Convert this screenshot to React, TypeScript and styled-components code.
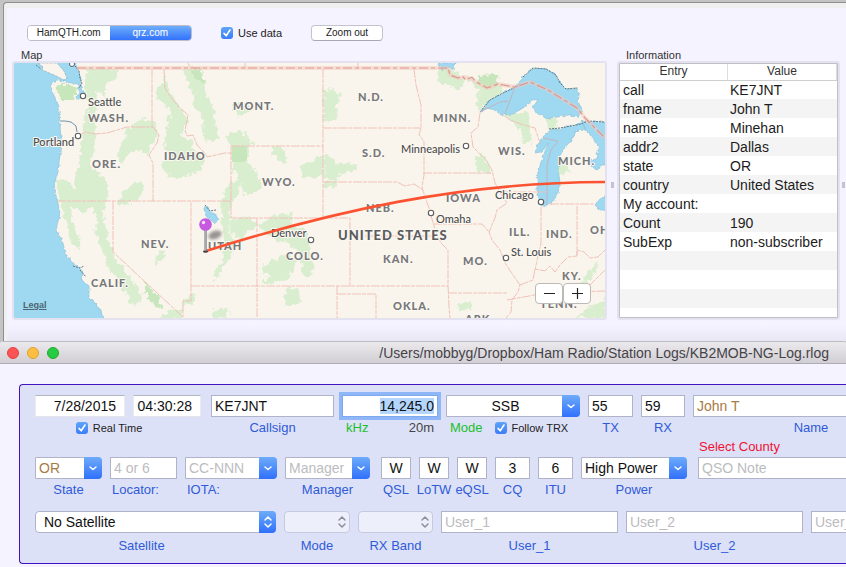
import React, { useEffect, useId, useRef } from "react";
import styled, { createGlobalStyle, css } from "styled-components";

const GlobalStyle = createGlobalStyle`
  *, *::before, *::after { box-sizing: border-box; }
  body { margin: 0; background: #c4c4c4; }
  body, button, input, select {
    font-family: "Liberation Sans", Arial, Helvetica, sans-serif;
  }
`;

/* ---------- lookup window ---------- */

const Desktop = styled.div`
  display: flex;
  flex-direction: column;
  min-height: 100vh;
  padding-top: 2px;
  overflow: hidden;
`;

const LookupWindow = styled.section`
  margin-left: 3px;
  padding: 5px 0 0 3px;
  border: 1px solid #8e8e8e;
  border-width: 1px 0 0 1px;
  border-top-left-radius: 4px;
  background: #f0f0f0;
`;

const LookupBody = styled.div`
  padding: 17px 0 21px 5px;
  background: linear-gradient(#f5f3ff, #f5f3ff calc(100% - 16px), #e9e7f4);
`;

const Toolbar = styled.div`
  display: flex;
  align-items: center;
  gap: 29px;
  height: 16px;
  margin: 0 0 7px 15px;
`;

const Segments = styled.div`
  display: flex;
  width: 165px;
  height: 16px;
  overflow: hidden;
  border: 1px solid #bdbcc8;
  border-radius: 4px;
`;

const Segment = styled.button<{ $active?: boolean }>`
  flex: 1;
  padding: 0;
  border: 0;
  font-size: 10px;
  line-height: 14px;
  color: ${(p) => (p.$active ? "#fff" : "#222")};
  background: ${(p) => (p.$active ? "linear-gradient(#6eaefb, #3272fb)" : "#fff")};
`;

const PushButton = styled.button`
  width: 72px;
  height: 16px;
  padding: 0;
  border: 1px solid #c4c2cf;
  border-bottom-color: #aaa8b4;
  border-radius: 4px;
  background: #fff;
  font-size: 10px;
  line-height: 14px;
  color: #222;
`;

const Check = styled.label`
  display: inline-flex;
  align-items: center;
  gap: 5px;
  font-size: 11px;
  line-height: 14px;
  color: #222;
  white-space: nowrap;
`;

const CheckBox = styled.span`
  display: grid;
  width: 12px;
  height: 12px;
  > * { grid-area: 1 / 1; }
  > input {
    appearance: none;
    width: 12px;
    height: 12px;
    margin: 0;
    border-radius: 3px;
    background: #fff;
  }
  > input:checked { background: linear-gradient(#5ea4f8, #3a7df8); }
  > svg { pointer-events: none; }
`;

function Tick({ label }: { label: string }) {
  return (
    <Check>
      <CheckBox>
        <input type="checkbox" defaultChecked />
        <svg width="12" height="12" viewBox="0 0 12 12" fill="none" stroke="#fff" strokeWidth="1.6" strokeLinecap="round" strokeLinejoin="round">
          <path d="M3 6.4 5.2 8.8 9 3" />
        </svg>
      </CheckBox>
      {label}
    </Check>
  );
}

const Panes = styled.div`
  display: grid;
  grid-template-columns: minmax(0, 1fr) 10px 223px 6px;
  grid-template-rows: 13px auto;
  align-items: center;
`;

const PaneTitle = styled.h2<{ $column: number }>`
  grid-column: ${(p) => p.$column};
  grid-row: 1;
  margin: 0 0 0 9px;
  font-size: 11px;
  font-weight: normal;
  line-height: 12px;
  color: #333;
`;

const Frame = styled.div<{ $column: number }>`
  position: relative;
  grid-column: ${(p) => p.$column};
  grid-row: 2;
  height: 259px;
  overflow: hidden;
  border: 2px solid #e4e1f1;
  border-radius: 3px;
`;

const Grip = styled.span<{ $column: number }>`
  grid-column: ${(p) => p.$column};
  grid-row: 2;
  justify-self: center;
  width: 3px;
  height: 6px;
  margin-bottom: 12px;
  background: #c5c3d1;
`;

const MapSvg = styled.svg`
  display: block;
  width: 100%;
  height: 100%;
`;

const ZoomGroup = styled.div`
  position: absolute;
  right: 14px;
  bottom: 14px;
  display: flex;
`;

const ZoomButton = styled.button`
  display: grid;
  place-items: center;
  width: 28px;
  height: 21px;
  padding: 0;
  border: 1px solid #bdb9b4;
  border-radius: 4px;
  background: #fff;
`;

const Legal = styled.a`
  position: absolute;
  left: 9px;
  bottom: 7px;
  font-size: 9px;
  font-weight: bold;
  line-height: 12px;
  color: #4b6570;
`;

/* ---------- map ---------- */

const StateText = styled.text`
  font: 900 11px Lato, sans-serif;
  letter-spacing: 1px;
  fill: #77777a;
  stroke: #fbf8f1;
  stroke-width: 2px;
  paint-order: stroke;
`;

const CountryText = styled(StateText)`
  font-size: 13px;
  fill: #5c5c5e;
`;

const CityText = styled.text`
  font: 500 11px Lato, sans-serif;
  fill: #4c4c4e;
  stroke: #fbf8f1;
  stroke-width: 2px;
  paint-order: stroke;
`;

const states: [string, number, number][] = [
  ["WASH.", 88, 122], ["ORE.", 92, 168], ["IDAHO", 164, 160], ["MONT.", 233, 110],
  ["N.D.", 358, 101], ["S.D.", 362, 157], ["MINN.", 433, 122], ["WIS.", 498, 155],
  ["MICH.", 558, 165], ["WYO.", 262, 186], ["NEV.", 141, 248], ["UTAH", 208, 250],
  ["CALIF.", 91, 287], ["COLO.", 286, 260], ["NEB.", 366, 212], ["IOWA", 446, 202],
  ["ILL.", 509, 236], ["IND.", 546, 238], ["OHIO", 590, 234], ["KAN.", 383, 263],
  ["MO.", 463, 265], ["KY.", 562, 280], ["OKLA.", 393, 310], ["ARK.", 465, 323],
  ["TENN.", 540, 308],
];

const cities: [string, number, number, number, number][] = [
  ["Seattle", 88, 106, 83, 96], ["Portland", 33, 146, 78, 136], ["Minneapolis", 401, 153, 466, 146],
  ["Denver", 271, 237, 311, 240], ["Chicago", 495, 199, 541, 202], ["Omaha", 436, 223, 431, 213],
  ["St. Louis", 511, 256, 506, 258],
];

const forests = [
  "M87 69H118L116 80 108 82 104 95 98 90 96 105 94 117 96 133 94 150 90 160 95 172 106 180 107 195 103 215 108 240 113 255 120 265 128 275 141 295 138 305 130 303 122 285 110 270 105 255 96 235V215L90 205 85 212 70 206 72 222 80 240 80 250 72 243 65 220 60 202 55 181H68L74 190 76 172 80 165 82 140 84 120 90 105 86 90Z",
  "M165 75 162 85 157 90 158 100 172 108 168 125 165 140V150L172 153 162 165 165 173 180 178 200 170 205 160 195 153 190 140 180 135 187 120 178 105 167 88Z",
  "M183 69H200L205 85 208 97 213 107 215 125 218 140H205L203 115 192 105 195 95 187 80Z",
  "M127 129 140 120 155 122 158 135 150 145 148 155 140 150 130 152 122 163 117 158 123 142Z",
  "M122 193 130 187 137 180 143 186 140 197 127 205 118 205Z",
  "M225 136 240 131 255 145H248L246 160 258 175 262 188 245 195 240 180 235 172 232 162V146Z",
  "M230 105 243 103 252 110 238 116Z",
  "M324 91 332 90 340 93 337 105 335 120 324 121Z",
  "M302 165 323 157V176L303 178Z M325 155 333 157 335 163 357 165 355 170 340 172 336 181 325 178Z",
  "M272 146 283 148 287 160 283 163 275 157Z",
  "M231 181H240L238 195 230 203 228 228 235 245 232 255 225 265 215 280 213 275 222 262 225 245 222 225V200Z",
  "M230 220 250 217 256 226 240 238 230 230Z",
  "M258 225 275 215 290 213V225L305 230 313 265 310 277 303 275 300 252 285 240 270 238Z",
  "M260 268 285 255 297 262 285 281 262 283 270 275Z",
  "M284 295 290 287 298 290 300 300 288 308Z",
  "M157 257 160 250 165 253 160 262 155 267Z",
  "M163 317 170 310 183 311V318Z M182 301 195 293 194 303 184 305Z M211 317 215 310 228 309V318Z",
  "M437 70 448 66 465 80 460 90 437 80Z M464 78 485 85 502 86V93L487 103 478 111 477 98 482 90Z",
  "M505 115 527 112 530 130V143L524 143 520 128Z M547 118H557L556 131 547 128Z",
  "M475 157 483 155 492 172 479 173Z M560 158H568V172L558 175Z",
  "M455 303 470 302 473 308 460 311Z",
  "M582 284 588 272 597 262V269L588 282Z M576 318 590 307 605 299V318Z",
  "M323 183H338L335 187H325Z",
];

const borders = [
  "M152 69V127 M78 136 85 132 95 134 107 133 127 127 153 127 159 135 157 143 149 155 153 163V201",
  "M164 69 165 88 170 96 179 107 188 115 185 130 187 136 193 135 197 145 205 153 207 157 225 153 231 153",
  "M231 146V218H350V286 M231 146H323 M323 69V218",
  "M323 128H421 M414 69 416 85 421 105V128L419 135 424 141V175L422 187 425 197 429 208 433 223 438 237 441 243 448 250V285L449 307 450 318",
  "M323 182H397L405 186 414 184 423 190",
  "M57 201H231 M113 201V252L183 317V301H191V201 M191 286H448 M257 218V318",
  "M350 236H437 M337 286V318 M337 294H376V318 M448 293H507",
  "M423 173H491 M480 113 478 127 471 133 473 147 486 160 492 170 495 183 501 194 507 203 497 210 495 218 489 232 492 240 500 250 505 263 513 275 520 285 518 292 512 300 511 312 506 318",
  "M433 224H482L489 232 M503 115 510 120 524 125 535 128 540 143 M503 192H547",
  "M541 207V243L538 256 535 270 M577 206V255 M550 204H595",
  "M520 285 533 280 535 269 545 271 550 266 555 272 560 265 568 257 577 256 577 250 584 252 590 258 598 257 605 250",
  "M507 300 540 294 575 292 605 291 M575 292 590 285 605 270",
  "M188 63 191 69 M245 63V69 M358 63V69",
];

const lakeLines = "M505 114 515 87 M480 112 500 102 508 101 M543 138 558 141 551 150 547 165 547 205";

function UsMap() {
  return (
    <MapSvg viewBox="14 63 591 255" preserveAspectRatio="xMidYMid slice" role="img" aria-label="Map of the United States">
      <defs>
        <filter id="ragged" x="-5%" y="-5%" width="110%" height="110%" colorInterpolationFilters="sRGB">
          <feTurbulence type="fractalNoise" baseFrequency="0.2" numOctaves="2" seed="4" />
          <feDisplacementMap in="SourceGraphic" scale="9" xChannelSelector="R" yChannelSelector="G" />
        </filter>
        <filter id="shore" x="-5%" y="-5%" width="110%" height="110%" colorInterpolationFilters="sRGB">
          <feTurbulence type="fractalNoise" baseFrequency="0.25" numOctaves="2" seed="9" />
          <feDisplacementMap in="SourceGraphic" scale="4" xChannelSelector="R" yChannelSelector="G" />
        </filter>
        <filter id="soft" x="-50%" y="-50%" width="200%" height="200%">
          <feGaussianBlur stdDeviation="1.8" />
        </filter>
      </defs>
      <rect x="14" y="63" width="591" height="255" fill="#f9f5ed" />
      <g filter="url(#ragged)">
        <g fill="#d9edcf" stroke="#d9edcf">{forests.map((d) => <path key={d} d={d} />)}</g>
        <path fill="#c8e6bb" d="M190 70 201 69 204 80 200 84ZM479 75 497 74 499 84 487 88 478 82ZM145 282 158 295 162 308 150 303 145 292ZM57 85H76L74 101H61Z" />
      </g>
      <path fill="#c8e6bb" d="M232 146H247V160L243 162H232Z" />
      <g fill="#9fd9f1" stroke="#86bcd4" strokeWidth="0.6" filter="url(#shore)">
        <path d="M8 58H74L78 70 81 78 80 85 84 92 82 97 77 100 76 96 80 92 77 84 66 82 58 80 52 82 51 88 55 98 59 110 60 125 61 138 60 155 58 172 54 185 57 199 60 213 56 230 63 243 65 253 74 265 80 268 83 272 82 280 89 287V297L97 305 106 322H8Z" />
        <path d="M480 113 490 100 503 93 518 85 523 77 533 68 546 69 556 75 560 83 566 89 577 88 579 95 578 101 582 110 578 117 566 115 558 117 548 118 536 113 533 107 538 100H533L523 108 513 114 501 115 495 110 486 108Z" />
        <path d="M534 153 540 142 546 133 553 129 560 130 566 126 574 126 581 122 587 126 582 130 576 131 573 138 568 144 563 150 559 158 558 170 560 182 558 193 553 202 545 207 539 203 537 196 537 184 538 170 543 157 548 143 541 152Z" />
        <path d="M580 120 586 122 610 122V165H603L596 170 590 164 589 158 595 160 597 155 599 148 594 140 587 131Z" />
        <path d="M595 205 600 199 610 194V210H600Z" />
        <path d="M205 205 208 207 210 212 215 214 219 220 215 223 208 218 205 212Z" />
        <path d="M438 63H456L453 69 446 68 442 71Z" />
      </g>
      <path fill="#f9f5ed" stroke="#7fa5b6" strokeWidth="0.6" strokeDasharray="3 1" d="M38 63 43 67 42 70 54 75 64 80 67 78 64 71 57 63Z" />
      <g fill="none" stroke="#5c7684" strokeWidth="1" strokeDasharray="2 1">
        <path d="M60 121 65 121 71 122 76 126 77 132" stroke="#6f93a8" strokeDasharray="none" />
        <path d="M36 65 41 69 M75 66 79 71 80 78 82 83 79 88 M73 266 80 268 84 266 M80 270 86 277" />
        <path d="M523 77 533 68 546 69 556 75 560 83 566 89 577 88 M480 112 490 100 503 93 518 86" />
        <path d="M549 129 560 128 571 126 581 124 588 121 605 122 M205 205 210 211 216 210" />
      </g>
      <path d={lakeLines} fill="none" stroke="#c0b4bf" />
      <g fill="none" stroke="#f1c1b6" strokeWidth="1" strokeDasharray="9 1 4 1">
        {borders.map((d) => <path key={d} d={d} />)}
      </g>
      <g fill="none" strokeLinejoin="round">
        <path stroke="#f3c8be" strokeOpacity=".5" strokeWidth="4" d="M77 68H448L450 75 458 78 466 77 475 81 480 84 487 88 498 84 515 87 530 82 548 90 577 108 585 118 592 125 605 138" />
        <path stroke="#e0958b" strokeWidth="1.2" strokeDasharray="9 3 4 3" d="M77 68H448L450 75 458 78 462 76 466 80 472 77 475 81 480 84 487 88 498 84 515 87 530 82 548 90 577 108 585 118 592 125 605 138" />
      </g>
      {states.map(([t, x, y]) => <StateText key={t} x={x} y={y}>{t}</StateText>)}
      <CountryText x="338" y="240">UNITED STATES</CountryText>
      <circle cx="72" cy="64" r="2.5" fill="#fff" stroke="#5d5d5d" />
      {cities.map(([t, x, y, cx, cy]) => (
        <g key={t}>
          <CityText x={x} y={y}>{t}</CityText>
          <circle cx={cx} cy={cy} r="2.7" fill="#fff" stroke="#5d5d5d" strokeWidth="1.1" />
        </g>
      ))}
      <ellipse cx="215" cy="235" rx="7" ry="4" fill="#555" opacity=".6" filter="url(#soft)" transform="rotate(-20 215 235)" />
      <path d="M206 251C330 212 460 182 606 182" fill="none" stroke="#fb5331" strokeWidth="2.6" />
      <ellipse cx="205.5" cy="251.5" rx="2.5" ry="1.2" fill="#3d3d3d" />
      <path d="M205.5 229V251" stroke="#8f8f94" strokeWidth="2.6" />
      <path d="M205 229V250" stroke="#c4c4c8" strokeWidth="1" />
      <circle cx="205.5" cy="224.5" r="6.3" fill="#c659de" />
      <circle cx="203.5" cy="222.5" r="1.7" fill="#f7e4fb" />
    </MapSvg>
  );
}

/* ---------- information table ---------- */

const TableBox = styled.div`
  height: 100%;
  overflow: hidden;
  border: 1px solid #bfbfc4;
  background: #fff;
`;

const InfoTable = styled.table`
  width: 100%;
  table-layout: fixed;
  border-collapse: collapse;
  th {
    height: 16px;
    padding: 0;
    border-bottom: 1px solid #cfcfcf;
    font-size: 12px;
    font-weight: normal;
    line-height: 15px;
    color: #333;
  }
  th:first-child { width: 107px; }
  th + th { box-shadow: inset 1px 0 #dcdcdc, inset -1px 0 #dcdcdc; }
  td {
    height: 19px;
    padding: 0 3px;
    font-size: 14px;
    line-height: 18px;
    color: #1c1c1c;
    white-space: nowrap;
  }
  tbody tr:nth-child(even) { background: #f4f4f4; }
`;

const info = [
  ["call", "KE7JNT"], ["fname", "John T"], ["name", "Minehan"], ["addr2", "Dallas"],
  ["state", "OR"], ["country", "United States"], ["My account:", ""], ["Count", "190"],
  ["SubExp", "non-subscriber"], ["", ""], ["", ""], ["", ""], ["", ""],
];

/* ---------- log window ---------- */

const LogWindow = styled.section`
  flex: 1;
  overflow: hidden;
  border-radius: 4px 4px 0 0;
  background: #f5f3ff;
`;

const TitleBar = styled.header`
  display: flex;
  align-items: center;
  gap: 8px;
  height: 23px;
  padding: 0 17px 0 7px;
  border-top: 1px solid #bcbac2;
  border-bottom: 1px solid #aeacb5;
  background: linear-gradient(#ebe9ec, #d2cfd4);
`;

const Light = styled.button<{ $color: string; $edge: string }>`
  width: 12px;
  height: 12px;
  padding: 0;
  border: 1px solid ${(p) => p.$edge};
  border-radius: 50%;
  background: ${(p) => p.$color};
`;

const Title = styled.h1`
  margin: 0 0 0 auto;
  font-size: 14px;
  font-weight: normal;
  line-height: 20px;
  color: #454348;
  white-space: nowrap;
`;

const Panel = styled.form`
  display: flex;
  flex-direction: column;
  margin: 20px 0 3px 19px;
  padding: 10px 0 9px 15px;
  overflow: hidden;
  border: 1px solid #4112bd;
  border-right: 0;
  border-radius: 4px 0 0 4px;
  background: #dde1f7;
`;

const Row = styled.div<{ $columns: string }>`
  display: grid;
  grid-template-columns: ${(p) => p.$columns};
  column-gap: 8px;
`;

const NoteRow = styled(Row)`
  row-gap: 2px;
  margin: 3px 0 13px;
`;

const County = styled.a`
  grid-column: -2 / -1;
  padding-left: 1px;
  font-size: 13px;
  line-height: 16px;
  color: #f01232;
  text-decoration: none;
`;

const Cell = styled.div<{ $low?: boolean; $inset?: boolean }>`
  display: flex;
  flex-direction: column;
  gap: ${(p) => (p.$low ? 5 : 3)}px;
  min-width: 0;
  padding-right: ${(p) => (p.$inset ? 3 : 0)}px;
`;

const Clock = styled.div`
  display: grid;
  grid-template-columns: 90px 68px;
  gap: 8px;
`;

const Caption = styled.div<{ $kind: "clock" | "spread" | "start" }>`
  display: flex;
  justify-content: ${(p) => ({ clock: "center", spread: "space-between", start: "flex-start" })[p.$kind]};
  align-items: center;
  gap: 12px;
  height: 16px;
  padding: ${(p) => (p.$kind === "clock" ? "0 20px 0 0" : "0 4px")};
`;

const Label = styled.label<{ $tone?: "blue" | "green" | "dark"; $start?: boolean; $wide?: boolean }>`
  align-self: ${(p) => (p.$start ? "flex-start" : "center")};
  padding: 0 ${(p) => (p.$wide ? 28 : 0)}px 0 ${(p) => (p.$start ? 2 : 0)}px;
  font-size: 13px;
  line-height: 16px;
  white-space: nowrap;
  color: ${(p) => ({ blue: "#2f5bd7", green: "#19bf2b", dark: "#444" })[p.$tone ?? "blue"]};
`;

const controlText = css`
  font-size: 14px;
  line-height: 20px;
  color: #111;
`;

const TextBox = styled.input<{ $align?: "left" | "center" | "right"; $found?: boolean; $plain?: boolean }>`
  ${controlText}
  width: 100%;
  height: 22px;
  padding: ${(p) => (p.$plain ? "0 8px 0 0" : "0 3px")};
  border: 1px solid #b1b3c8;
  border-radius: 0;
  background: #fff;
  text-align: ${(p) => p.$align ?? "left"};
  outline: none;
  ${(p) => p.$found && "color: #a87b45;"}
  ${(p) => p.$plain && "border-color: #b3b5c0 #ececf0 #e4e4ea; "}
  &::placeholder { color: #bcbcbf; opacity: 1; }
  &::selection { background: #b3d5fe; color: #111; }
  &:focus { border-color: #7fa9ee; box-shadow: 0 0 0 3px #8fb7f7; }
`;

const DropBox = styled.div<{ $popup?: boolean; $faded?: boolean }>`
  display: grid;
  grid-template-columns: minmax(0, 1fr) ${(p) => (p.$popup ? 17 : 18)}px;
  height: ${(p) => (p.$popup ? 21 : 21)}px;
  margin-bottom: 1px;
  > select {
    ${controlText}
    grid-area: 1 / 1 / 2 / 3;
    appearance: none;
    min-width: 0;
    height: 100%;
    padding: 0 18px 0 ${(p) => (p.$popup ? 8 : 3)}px;
    border: 1px solid ${(p) => (p.$faded ? "#c6c9df" : "#b1b3c8")};
    border-radius: ${(p) => (p.$popup ? 4 : 0)}px;
    border-top-right-radius: 4px;
    border-bottom-right-radius: 4px;
    background: ${(p) => (p.$faded ? "#edeffb" : "#fff")};
    outline: none;
  }
`;

const Drop = styled.select<{ $tone?: string; $center?: boolean }>`
  && { color: ${(p) => p.$tone ?? "#111"}; opacity: 1; }
  text-align-last: ${(p) => (p.$center ? "center" : "left")};
`;

const DropCap = styled.span<{ $faded?: boolean }>`
  grid-area: 1 / 2;
  z-index: 1;
  display: grid;
  place-items: center;
  border-radius: 0 4px 4px 0;
  background: ${(p) => (p.$faded ? "none" : "linear-gradient(#6dabfa, #3070fb)")};
  pointer-events: none;
`;

type FieldProps = {
  label: string;
  value?: string;
  hint?: string;
  align?: "left" | "center" | "right";
  found?: boolean;
  start?: boolean;
  low?: boolean;
};

function Field({ label, value, hint, align, found, start, low }: FieldProps) {
  const id = useId();
  return (
    <Cell $low={low}>
      <TextBox id={id} defaultValue={value} placeholder={hint} $align={align} $found={found} />
      <Label htmlFor={id} $start={start}>{label}</Label>
    </Cell>
  );
}

type ChoiceProps = { id: string; value: string; tone?: string; center?: boolean; popup?: boolean; faded?: boolean };

function Choice({ id, value, tone, center, popup, faded }: ChoiceProps) {
  return (
    <DropBox $popup={popup} $faded={faded}>
      <Drop id={id} $tone={tone} $center={center} disabled={faded} defaultValue={value}>
        <option>{value}</option>
      </Drop>
      <DropCap $faded={faded}>
        <svg width="12" height="14" viewBox="0 0 12 14" fill="none" stroke={faded ? "#8d8f9c" : "#fff"} strokeWidth="1.5" strokeLinecap="round" strokeLinejoin="round">
          {popup ? <path d="M3 5 6 2 9 5M3 9 6 12 9 9" /> : <path d="M3 6 6 8.5 9 6" />}
        </svg>
      </DropCap>
    </DropBox>
  );
}

type ChoiceFieldProps = Omit<ChoiceProps, "id"> & {
  label: string;
  start?: boolean;
  low?: boolean;
  wide?: boolean;
  inset?: boolean;
};

function ChoiceField({ label, start, low, wide, inset, ...rest }: ChoiceFieldProps) {
  const id = useId();
  return (
    <Cell $low={low} $inset={inset}>
      <Choice id={id} {...rest} />
      <Label htmlFor={id} $start={start} $wide={wide}>{label}</Label>
    </Cell>
  );
}

function Frequency() {
  const ref = useRef<HTMLInputElement>(null);
  useEffect(() => {
    ref.current?.focus();
    ref.current?.select();
  }, []);
  return (
    <Cell>
      <TextBox ref={ref} id="khz" defaultValue="14,245.0" $align="right" />
      <Caption $kind="spread">
        <Label htmlFor="khz" $tone="green">kHz</Label>
        <Label as="span" $tone="dark">20m</Label>
      </Caption>
    </Cell>
  );
}

export default function App() {
  return (
    <>
      <GlobalStyle />
      <Desktop>
        <LookupWindow>
          <LookupBody>
            <Toolbar>
              <Segments>
                <Segment type="button">HamQTH.com</Segment>
                <Segment type="button" $active>qrz.com</Segment>
              </Segments>
              <Tick label="Use data" />
              <PushButton type="button">Zoom out</PushButton>
            </Toolbar>
            <Panes>
              <PaneTitle $column={1}>Map</PaneTitle>
              <PaneTitle $column={3}>Information</PaneTitle>
              <Frame $column={1}>
                <UsMap />
                <Legal href="#legal">Legal</Legal>
                <ZoomGroup>
                  <ZoomButton type="button" aria-label="Zoom map out">
                    <svg width="13" height="13" stroke="#222" strokeWidth="1.2"><path d="M1 6.5H12" /></svg>
                  </ZoomButton>
                  <ZoomButton type="button" aria-label="Zoom map in">
                    <svg width="13" height="13" stroke="#222" strokeWidth="1.2"><path d="M1 6.5H12M6.5 1V12" /></svg>
                  </ZoomButton>
                </ZoomGroup>
              </Frame>
              <Grip $column={2} />
              <Frame $column={3}>
                <TableBox>
                  <InfoTable>
                    <thead>
                      <tr><th>Entry</th><th>Value</th></tr>
                    </thead>
                    <tbody>
                      {info.map(([entry, value], i) => (
                        <tr key={i}><td>{entry}</td><td>{value}</td></tr>
                      ))}
                    </tbody>
                  </InfoTable>
                </TableBox>
              </Frame>
              <Grip $column={4} />
            </Panes>
          </LookupBody>
        </LookupWindow>
        <LogWindow>
          <TitleBar>
            <Light $color="#fc5454" $edge="#e0443f" aria-label="Close" />
            <Light $color="#fdbe41" $edge="#dfa032" aria-label="Minimize" />
            <Light $color="#27cb41" $edge="#1fab31" aria-label="Zoom" />
            <Title>/Users/mobbyg/Dropbox/Ham Radio/Station Logs/KB2MOB-NG-Log.rlog</Title>
          </TitleBar>
          <Panel>
            <Row $columns="168px 123px 96px 134px 45px 44px minmax(236px, 1fr)">
              <Cell>
                <Clock>
                  <TextBox aria-label="Date" defaultValue="7/28/2015" $align="right" $plain />
                  <TextBox aria-label="Time" defaultValue="04:30:28" $align="right" $plain />
                </Clock>
                <Caption $kind="clock"><Tick label="Real Time" /></Caption>
              </Cell>
              <Field label="Callsign" value="KE7JNT" />
              <Frequency />
              <Cell>
                <Choice id="mode" value="SSB" center />
                <Caption $kind="start">
                  <Label htmlFor="mode" $tone="green">Mode</Label>
                  <Tick label="Follow TRX" />
                </Caption>
              </Cell>
              <Field label="TX" value="55" />
              <Field label="RX" value="59" />
              <Field label="Name" value="John T" found />
            </Row>
            <NoteRow $columns="67px 67px 92px 88px 30px 30px 30px 35px 35px 109px minmax(236px, 1fr)">
              <County href="#county">Select County</County>
              <ChoiceField label="State" value="OR" tone="#a87b45" />
              <Field label="Locator:" hint="4 or 6" start />
              <ChoiceField label="IOTA:" value="CC-NNN" tone="#bcbcbf" start />
              <ChoiceField label="Manager" value="Manager" tone="#bcbcbf" inset />
              <Field label="QSL" value="W" align="center" />
              <Field label="LoTW" value="W" align="center" />
              <Field label="eQSL" value="W" align="center" />
              <Field label="CQ" value="3" align="center" />
              <Field label="ITU" value="6" align="center" />
              <ChoiceField label="Power" value="High Power" inset />
              <TextBox aria-label="QSO Note" placeholder="QSO Note" />
            </NoteRow>
            <Row $columns="241px 66px 75px 177px 177px 177px">
              <ChoiceField label="Satellite" value="No Satellite" popup low wide />
              <ChoiceField label="Mode" value="" popup faded low />
              <ChoiceField label="RX Band" value="" popup faded low />
              <Field label="User_1" hint="User_1" low />
              <Field label="User_2" hint="User_2" low />
              <Field label="User_3" hint="User_3" low />
            </Row>
          </Panel>
        </LogWindow>
      </Desktop>
    </>
  );
}
